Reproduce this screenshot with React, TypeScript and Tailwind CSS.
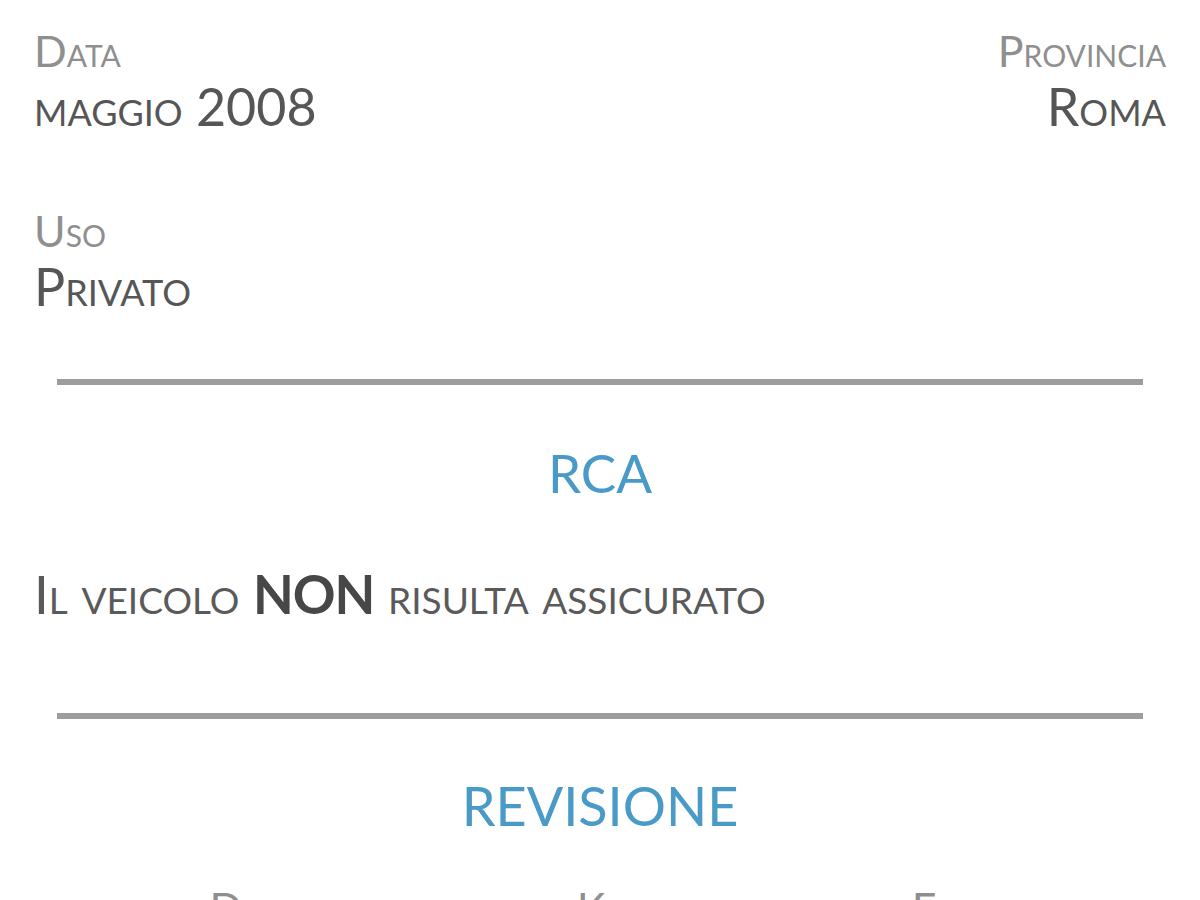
const label = "text-[43px] leading-[43px] text-[#8f8f8f] [font-variant:small-caps]";
const value = "text-[52px] leading-[52px] text-[#565656] [font-variant:small-caps]";

function Field({ name, val, right }: { name: string; val: string; right?: boolean }) {
  return (
    <div className={right ? "text-right" : ""}>
      <div className={label}>{name}</div>
      <div className={`mt-[8px] ${value}`}>{val}</div>
    </div>
  );
}

function Divider() {
  return <div className="mx-[23px] h-[6px] bg-[#9d9d9d]" />;
}

export default function App() {
  return (
    <div className="w-[1200px] h-[900px] overflow-hidden bg-white px-[34px] pt-[29px] font-['Lato',sans-serif]">
      <div className="flex justify-between">
        <Field name="Data" val="maggio 2008" />
        <Field name="Provincia" val="Roma" right />
      </div>
      <div className="mt-[77px]">
        <Field name="Uso" val="Privato" />
      </div>

      <div className="mt-[67px]">
        <Divider />
      </div>

      <h2 className="mt-[61px] text-center text-[53px] leading-[53px] text-[#4a9ac8] font-normal">RCA</h2>

      <p className="mt-[68px] text-[53px] leading-[53px] text-[#5a5a5a] [font-variant:small-caps]">
        Il veicolo <span className="font-bold tracking-[-1px] text-[#474747]">NON</span> risulta assicurato
      </p>

      <div className="mt-[93px]">
        <Divider />
      </div>

      <h2 className="mt-[60px] text-center text-[54px] leading-[54px] text-[#4a9ac8] font-normal">REVISIONE</h2>

      <div className="mt-[53px] ml-[43px] mr-[33px] grid grid-cols-3 text-center">
        <div className={label}>Data</div>
        <div className={label}>Km</div>
        <div className={label}>Esito</div>
      </div>
    </div>
  );
}
